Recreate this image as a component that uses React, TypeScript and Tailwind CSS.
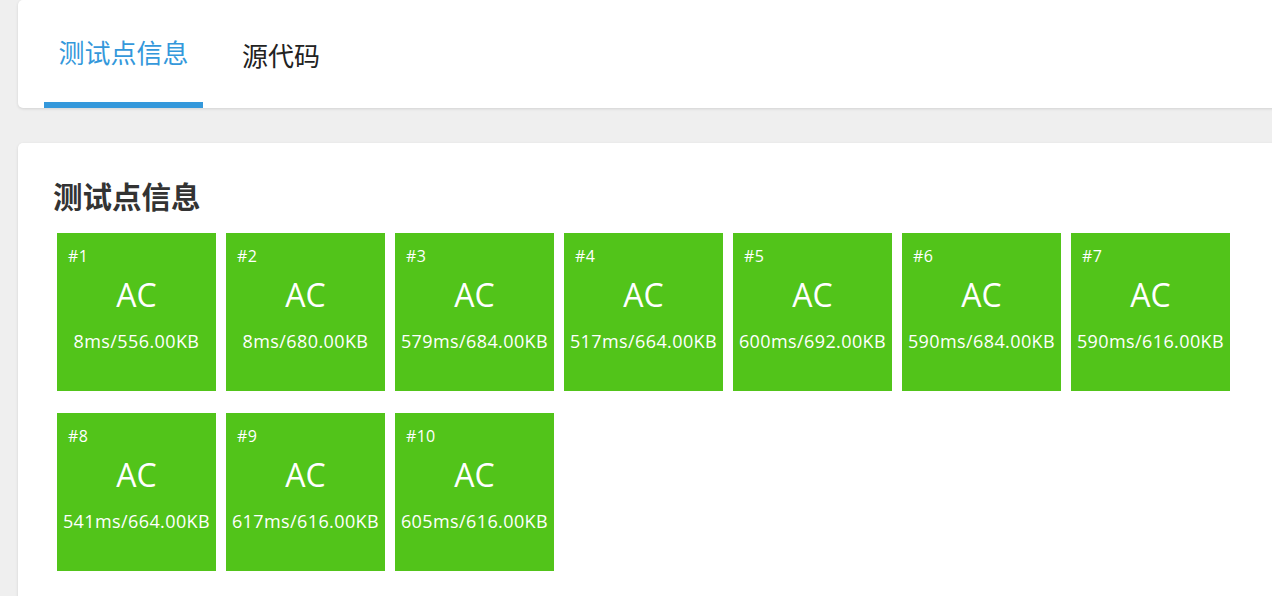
import React from "react";

const cases = [
  { id: 1, info: "8ms/556.00KB" },
  { id: 2, info: "8ms/680.00KB" },
  { id: 3, info: "579ms/684.00KB" },
  { id: 4, info: "517ms/664.00KB" },
  { id: 5, info: "600ms/692.00KB" },
  { id: 6, info: "590ms/684.00KB" },
  { id: 7, info: "590ms/616.00KB" },
  { id: 8, info: "541ms/664.00KB" },
  { id: 9, info: "617ms/616.00KB" },
  { id: 10, info: "605ms/616.00KB" },
];

export default function App() {
  return (
    <div
      className="w-full h-[596px] overflow-hidden bg-[#efefef] pl-[18px]"
      style={{ fontFamily: '"Open Sans", "Noto Sans CJK SC", sans-serif' }}
    >
      <div className="mr-[-40px] flex flex-col">
        <div className="h-[108px] bg-white rounded-[5px] shadow-[0_1px_3px_rgba(0,0,0,0.12)] flex pl-[26px]">
          <div className="w-[159px] h-full flex flex-col">
            <div className="flex-1 flex items-center justify-center text-[26px] text-[#3498db] leading-[34px] pt-[4px]">
              测试点信息
            </div>
            <div className="h-[6px] bg-[#3498db]" />
          </div>
          <div className="ml-[26px] h-full flex flex-col">
            <div className="flex-1 flex items-center px-[13px] text-[26px] text-[#222] leading-[34px] pt-[4px]">
              源代码
            </div>
          </div>
        </div>

        <div className="mt-[35px] bg-white rounded-[5px] shadow-[0_1px_3px_rgba(0,0,0,0.12)] pl-[35px] pt-[36px] pb-[40px]">
          <div className="text-[29.5px] font-bold leading-[36px] text-[#333]">测试点信息</div>
          <div className="mt-[18px] pl-[4px] flex flex-wrap w-[1190px] gap-x-[10px] gap-y-[22px]">
            {cases.map((c) => (
              <div
                key={c.id}
                className="w-[159px] h-[158px] bg-[#52c41a] text-white flex flex-col"
              >
                <div className="pl-[11px] pt-[13px] text-[16px] font-medium leading-[20px] tracking-[0.3px]">#{c.id}</div>
                <div className="mt-[9px] text-center text-[32px] leading-[40px]">AC</div>
                <div className="mt-[14px] text-center text-[18px] font-medium leading-[24px] whitespace-nowrap tracking-[0.4px]">
                  {c.info}
                </div>
              </div>
            ))}
          </div>
        </div>
      </div>
    </div>
  );
}
